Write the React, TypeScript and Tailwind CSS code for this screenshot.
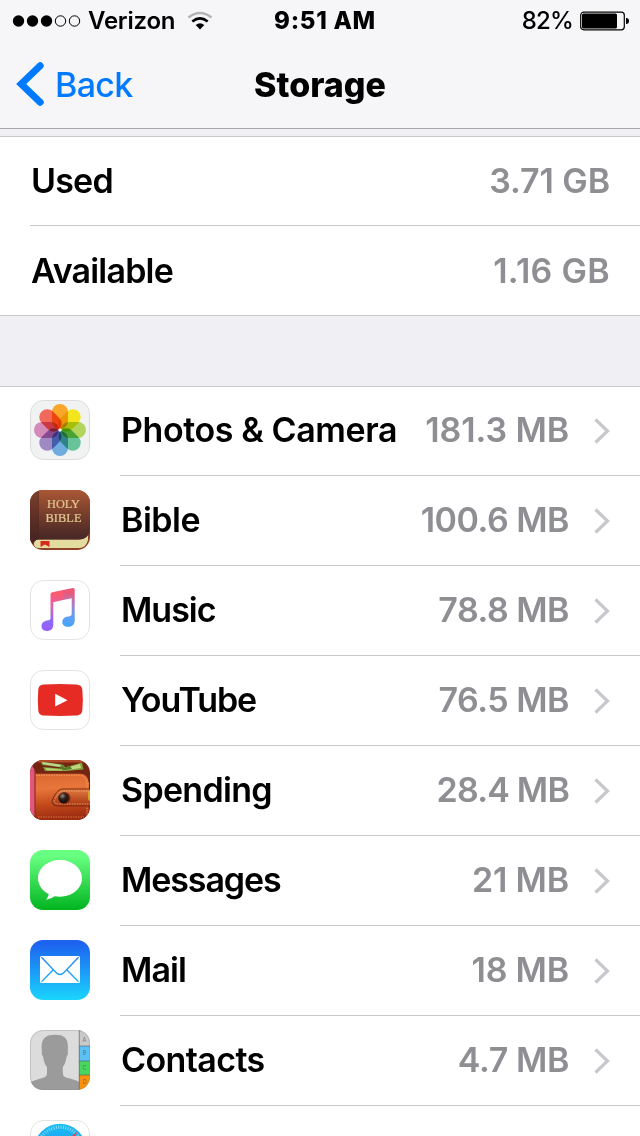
import { ReactNode } from 'react';

type StorageItem = {
  name: string;
  size: string;
  icon: ReactNode;
  nameClass: string;
  sizeClass: string;
};

const petals = ['#f9a62b', '#f2e51c', '#b3d55b', '#68c39a', '#70ace0', '#a08ac4', '#d58bb9', '#f2695c'];

const PhotosIcon = () => (
  <svg viewBox="0 0 60 60" className="size-[60px]">
    <rect x="0.5" y="0.5" width="59" height="59" rx="13" fill="#f1f3f3" stroke="#dcdcdc" />
    <g style={{ isolation: 'isolate' }}>
      {petals.map((color, index) => (
        <rect
          key={color}
          x="22"
          y="4"
          width="16"
          height="25"
          rx="8"
          fill={color}
          transform={`rotate(${index * 45} 30 30)`}
          className="mix-blend-multiply"
        />
      ))}
    </g>
    <circle cx="30" cy="30" r="1.6" fill="#fff" />
  </svg>
);

const BibleIcon = () => (
  <svg viewBox="0 0 60 60" className="size-[60px]">
    <defs>
      <linearGradient id="bible-cover" x1="0" y1="0" x2="0" y2="1">
        <stop offset="0" stopColor="#aa5835" />
        <stop offset="0.5" stopColor="#713b2b" />
        <stop offset="0.85" stopColor="#4b2927" />
      </linearGradient>
      <clipPath id="bible-clip">
        <rect width="60" height="60" rx="13" />
      </clipPath>
    </defs>
    <g clipPath="url(#bible-clip)">
      <rect width="60" height="60" fill="#8f4028" />
      <path d="M8 49.5H50Q56 49 58 44V50Q56 57.5 50 58H9Q4 58 4 54Q4 50 8 49.5Z" fill="#e3dca0" />
      <path d="M0 0H60V40Q59 49.5 48 49.5H9Q4 49.5 3 54L0 50Z" fill="url(#bible-cover)" />
      <path d="M0 0H8V49.5Q4 50 3 54L0 50Z" fill="#4a211d" fillOpacity="0.45" />
      <path d="M8.5 1V49" stroke="#3e1d1b" strokeOpacity="0.5" />
      <path d="M10.5 51H19.5V57L15 54.5L10.5 57Z" fill="#d9271c" />
    </g>
    <text x="33.5" y="18.3" textAnchor="middle" textLength="33" lengthAdjust="spacingAndGlyphs" fontSize="12.5" fill="#e0cb92" stroke="#e0cb92" strokeWidth="0.2" className="font-['Liberation_Serif',serif]">
      HOLY
    </text>
    <text x="33.5" y="31.5" textAnchor="middle" textLength="36" lengthAdjust="spacingAndGlyphs" fontSize="12.5" fill="#e0cb92" stroke="#e0cb92" strokeWidth="0.2" className="font-['Liberation_Serif',serif]">
      BIBLE
    </text>
  </svg>
);

const MusicIcon = () => (
  <svg viewBox="0 0 60 60" className="size-[60px]">
    <defs>
      <linearGradient id="music-left" x1="0" y1="8" x2="0" y2="51" gradientUnits="userSpaceOnUse">
        <stop offset="0.15" stopColor="#fa5b73" />
        <stop offset="0.45" stopColor="#d965b0" />
        <stop offset="0.75" stopColor="#8b6cf6" />
        <stop offset="1" stopColor="#9a5cff" />
      </linearGradient>
      <linearGradient id="music-right" x1="0" y1="8" x2="0" y2="47" gradientUnits="userSpaceOnUse">
        <stop offset="0.1" stopColor="#ee5776" />
        <stop offset="0.4" stopColor="#b27bc4" />
        <stop offset="0.7" stopColor="#669df2" />
        <stop offset="1" stopColor="#42a5fb" />
      </linearGradient>
    </defs>
    <rect x="0.5" y="0.5" width="59" height="59" rx="13" fill="#fff" stroke="#e3e3e3" />
    <path d="M20.5 14.5Q20.5 12.7 22.3 12.3L33 10.1V20.1L23.3 22.2V44.5C23.3 49 20.5 51 16.5 51C13.5 51 11.5 49 11.5 46.3C11.5 43 13.8 41 17 40.5C19.8 40.1 20.5 39.8 20.5 37.5Z" fill="url(#music-left)" />
    <path d="M33 10.1L42.8 8Q44.7 7.6 44.7 9.5V40C44.7 44.7 42 46.8 37.8 46.8C34.5 46.8 32.3 44.8 32.3 42.2C32.3 39 34.8 37 38 36.6C41 36.2 41.7 35.5 41.7 33.3V18.3L33 20.1Z" fill="url(#music-right)" />
  </svg>
);

const YouTubeIcon = () => (
  <svg viewBox="0 0 60 60" className="size-[60px]">
    <rect x="0.5" y="0.5" width="59" height="59" rx="13" fill="#fff" stroke="#e3e3e3" />
    <path d="M14 14.5Q30 13.5 46 14.5C50.5 14.8 52 16.5 52.4 20.5Q53.3 30 52.4 39.5C52 43.5 50.5 45.3 46 45.6Q30 46.5 14 45.6C9.8 45.3 8.5 43.5 8.2 39.5Q7.5 30 8.2 20.5C8.5 16.5 9.8 14.8 14 14.5Z" fill="#e62b24" />
    <path d="M25.2 23.8L37.5 30.2L25.2 36.6Z" fill="#fff" />
  </svg>
);

const SpendingIcon = () => (
  <svg viewBox="0 0 60 60" className="size-[60px]">
    <defs>
      <linearGradient id="wallet" x1="0" y1="0" x2="0.1" y2="1">
        <stop offset="0" stopColor="#d9642c" />
        <stop offset="0.35" stopColor="#e8763b" />
        <stop offset="0.7" stopColor="#c2481a" />
        <stop offset="1" stopColor="#9c2d10" />
      </linearGradient>
      <linearGradient id="wallet-strap" x1="0" y1="0" x2="0" y2="1">
        <stop offset="0" stopColor="#e27a42" />
        <stop offset="1" stopColor="#a63410" />
      </linearGradient>
      <radialGradient id="wallet-snap" cx="0.4" cy="0.3" r="0.7">
        <stop offset="0" stopColor="#9b8c83" />
        <stop offset="0.45" stopColor="#30211d" />
        <stop offset="1" stopColor="#140c0a" />
      </radialGradient>
      <clipPath id="wallet-clip">
        <rect width="60" height="60" rx="13" />
      </clipPath>
    </defs>
    <g clipPath="url(#wallet-clip)">
      <rect width="60" height="60" fill="#722510" />
      <path d="M2 0H60V2.5H8Z" fill="#b24b27" />
      <path d="M11 1.5L33 4.5L36 8L12 5Z" fill="#6f8d3c" />
      <path d="M12 2L31 4.8L30 7L13 4.2Z" fill="#c5d48d" />
      <path d="M13 7L31 8.5L52 2.5L53.5 9.5L36 11L15 11Z" fill="#7fa03c" />
      <path d="M15 8L31 9.5L50 4L51 8L34 10.5L17 10.2Z" fill="#c2d67e" />
      <path d="M29 6.5L34 8L40 6L42 9L33 10.5Z" fill="#567a28" />
      <path d="M4 13H51Q58 14 59 21V60H4Z" fill="url(#wallet)" />
      <path d="M0 5Q5 7 5 13V57L0 52Z" fill="#e2577a" />
      <path d="M5 10V58" stroke="#8f2c23" strokeWidth="1.2" />
      <path d="M6 15.2H49Q56.500 15.700 57 22.700V56" fill="none" stroke="#f0a56d" strokeWidth="0.9" strokeDasharray="1.5 1" />
      <path d="M6 13.2H51Q58.500 14 59 22" fill="none" stroke="#742814" strokeWidth="1.2" />
      <path d="M8 57H54" stroke="#e88653" strokeWidth="0.8" strokeDasharray="1.5 1" />
      <path d="M60 29H32Q26 30 22 41Q22 46 28 46H60Z" fill="url(#wallet-strap)" stroke="#812b13" />
      <path d="M60 31H33Q28 32 24 41Q24 44 29 44H60" fill="none" stroke="#f1aa73" strokeWidth="0.9" strokeDasharray="1.5 1" />
      <path d="M58 31H60V42L58 39Z" fill="#d6a22a" />
      <circle cx="34.5" cy="38" r="6" fill="#7d2b14" />
      <circle cx="33.5" cy="38" r="5.2" fill="url(#wallet-snap)" />
    </g>
  </svg>
);

const MessagesIcon = () => (
  <svg viewBox="0 0 60 60" className="size-[60px]">
    <defs>
      <linearGradient id="messages" x1="0" y1="0" x2="0" y2="1">
        <stop offset="0.1" stopColor="#67ff81" />
        <stop offset="1" stopColor="#01b41f" />
      </linearGradient>
    </defs>
    <rect width="60" height="60" rx="13" fill="url(#messages)" />
    <path d="M30 10C42.2 10 52 18.2 52 28.3C52 38.5 42.2 46.7 30 46.7C28.2 46.7 26.3 46.5 24.6 46.2C22 48 19 49.3 15.8 49.5C17.7 48 18.6 46 18.7 44.1C12.3 40.9 8 35 8 28.3C8 18.2 17.8 10 30 10Z" fill="#fff" />
  </svg>
);

const MailIcon = () => (
  <svg viewBox="0 0 60 60" className="size-[60px]">
    <defs>
      <linearGradient id="mail" x1="0" y1="0" x2="0" y2="60" gradientUnits="userSpaceOnUse">
        <stop offset="0.05" stopColor="#1d62f0" />
        <stop offset="1" stopColor="#1ad5fd" />
      </linearGradient>
    </defs>
    <rect width="60" height="60" rx="13" fill="url(#mail)" />
    <rect x="10" y="16" width="40" height="27" rx="1.5" fill="#fff" />
    <g fill="none" stroke="url(#mail)" strokeWidth="1.3">
      <path d="M11.5 17.2L25.5 32Q30 37 34.5 32L48.5 17.2" />
      <path d="M11.5 41.8L23 30M48.5 41.8L37 30" />
    </g>
  </svg>
);

const tabs = [
  { letter: 'A', color: '#c9c9c9', y: 0, height: 16 },
  { letter: 'B', color: '#5cc1f5', y: 16, height: 15 },
  { letter: 'C', color: '#48d75c', y: 31, height: 14 },
  { letter: 'D', color: '#fb9108', y: 45, height: 15 }
];

const ContactsIcon = () => (
  <svg viewBox="0 0 60 60" className="size-[60px]">
    <defs>
      <clipPath id="contacts-clip">
        <rect width="60" height="60" rx="13" />
      </clipPath>
    </defs>
    <g clipPath="url(#contacts-clip)">
      <rect width="60" height="60" fill="#dcdcdc" />
      <path d="M1 52Q3 50.5 14 47.5Q17 46.5 17 43V37Q14 34 13.2 27Q11 24 11.8 21C10.5 9 15 4.8 25 4.8C35 4.8 39 9 37.8 21Q38.8 24 36.5 27Q35.5 34 32.8 37V43Q33 46.5 36 47.5Q47 50 49 52V60H0Z" fill="#9b9b9b" />
      {tabs.map((tab) => (
        <g key={tab.letter}>
          <rect x="49" y={tab.y} width="11" height={tab.height} fill={tab.color} />
          <path d={`M49 ${tab.y}H60`} stroke="#50636b" strokeOpacity="0.6" strokeWidth="1.2" />
          <text x="54.5" y={tab.y === 0 ? 11.5 : tab.y + 9} textAnchor="middle" fontSize="5.5" fill="#4d626b" fillOpacity="0.8">
            {tab.letter}
          </text>
        </g>
      ))}
      <path d="M49.3 0V60" stroke="#666" strokeOpacity="0.6" strokeWidth="1.2" />
    </g>
    <rect x="0.5" y="0.5" width="59" height="59" rx="12.5" fill="none" stroke="#888" strokeOpacity="0.3" />
  </svg>
);

const SafariIcon = () => (
  <svg viewBox="0 0 60 60" className="size-[60px]">
    <defs>
      <linearGradient id="safari" x1="0" y1="0" x2="0" y2="1">
        <stop offset="0" stopColor="#1bc0f2" />
        <stop offset="1" stopColor="#1d70f0" />
      </linearGradient>
    </defs>
    <rect x="0.5" y="0.5" width="59" height="59" rx="13" fill="#fff" stroke="#e3e3e3" />
    <circle cx="30" cy="30" r="26.3" fill="url(#safari)" />
    <circle cx="30" cy="30" r="22.8" fill="none" stroke="#fff" strokeOpacity="0.65" strokeWidth="3.2" strokeDasharray="0.7 1.688" />
    <path d="M48 11.5L33.5 33L27 27Z" fill="#f5393c" />
    <path d="M12 48.5L33.5 33L27 27Z" fill="#f3f3f3" />
  </svg>
);

const items: StorageItem[] = [
  { name: 'Photos & Camera', size: '181.3 MB', icon: <PhotosIcon />, nameClass: 'tracking-[-0.4px]', sizeClass: 'tracking-[-0.1px]' },
  { name: 'Bible', size: '100.6 MB', icon: <BibleIcon />, nameClass: 'tracking-[-0.5px]', sizeClass: 'tracking-[-0.5px]' },
  { name: 'Music', size: '78.8 MB', icon: <MusicIcon />, nameClass: 'tracking-[-1px]', sizeClass: 'tracking-[-0.5px]' },
  { name: 'YouTube', size: '76.5 MB', icon: <YouTubeIcon />, nameClass: 'tracking-[-1.1px]', sizeClass: 'tracking-[-0.5px]' },
  { name: 'Spending', size: '28.4 MB', icon: <SpendingIcon />, nameClass: 'tracking-[-0.7px]', sizeClass: 'tracking-[-0.8px]' },
  { name: 'Messages', size: '21 MB', icon: <MessagesIcon />, nameClass: 'tracking-[-1.1px]', sizeClass: 'tracking-[-0.2px]' },
  { name: 'Mail', size: '18 MB', icon: <MailIcon />, nameClass: 'tracking-[-0.9px]', sizeClass: 'tracking-[-0.2px]' },
  { name: 'Contacts', size: '4.7 MB', icon: <ContactsIcon />, nameClass: 'tracking-[-0.6px]', sizeClass: 'tracking-[-0.4px]' }
];

export default function App() {
  return (
    <main className="flex h-[1136px] w-[640px] flex-col overflow-hidden bg-[#efeff4] font-['Inter',sans-serif] text-black">
      <header className="h-[129px] shrink-0 border-b border-[#a7a7aa] bg-[#f6f6f8]">
        <StatusBar />
        <nav className="grid h-[88px] grid-cols-3 items-center">
          <button className="flex items-center gap-[11px] pl-4 text-[#007aff]">
            <svg viewBox="0 0 28 44" className="h-11 w-7">
              <path d="M24.2 3.8L5.2 22L24.2 40.2" fill="none" stroke="currentColor" strokeWidth="7" strokeLinecap="round" strokeLinejoin="miter" />
            </svg>
            <span className="pt-px text-[34px]/[40px] font-medium tracking-[-0.7px]">Back</span>
          </button>
          <h1 className="pt-px text-center text-[34px]/[40px] font-extrabold">Storage</h1>
        </nav>
      </header>

      <section className="mt-[7px] shrink-0 border-y border-[#c8c7cc] bg-white pl-[30px]">
        <SummaryRow label="Used" value="3.71 GB" valueClass="tracking-[-0.1px]" />
        <div className="h-px bg-[#c8c7cc]" />
        <SummaryRow label="Available" value="1.16 GB" valueClass="tracking-[0.3px]" />
      </section>

      <ul className="mt-[70px] shrink-0 border-t border-[#c8c7cc] bg-white">
        {items.map((item) => (
          <StorageRow key={item.name} item={item} />
        ))}
        <li className="h-[90px] pt-3.5 pl-[30px]">
          <SafariIcon />
        </li>
      </ul>
    </main>
  );
}

const StatusBar = () => (
  <div className="grid h-10 grid-cols-3 items-center text-[24px]/[30px]">
    <div className="flex items-center pt-px pl-3">
      <svg viewBox="0 0 70 12" className="h-3 w-[70px] shrink-0">
        <circle cx="6.5" cy="6" r="5.7" />
        <circle cx="20.5" cy="6" r="5.7" />
        <circle cx="34.5" cy="6" r="5.7" />
        <circle cx="48.5" cy="6" r="5.2" fill="none" stroke="#000" />
        <circle cx="62.5" cy="6" r="5.2" fill="none" stroke="#000" />
      </svg>
      <span className="ml-1.5 font-semibold tracking-[-0.2px]">Verizon</span>
      <svg viewBox="0 0 26 20" className="ml-3 h-5 w-[26px] shrink-0" fill="none" strokeWidth="2.6">
        <path d="M1.5 6.5Q13 -2.5 24.5 6.5" stroke="#b3b3b5" />
        <path d="M5.3 10.5Q13 4.3 20.7 10.5" stroke="#000" />
        <path d="M8.7 14Q13 10.6 17.3 14L13 18.5Z" fill="#000" stroke="none" />
      </svg>
    </div>
    <span className="pt-0.5 pl-2.5 text-center font-extrabold tracking-[0.7px]">9:51 AM</span>
    <div className="flex items-center justify-end pt-px pr-[11px] font-medium">
      <span className="tracking-[-0.8px]">82%</span>
      <svg viewBox="0 0 49 20" className="ml-[7px] h-5 w-[49px]">
        <rect x="0.7" y="1.2" width="43.6" height="17.6" rx="3" fill="none" stroke="#000" strokeWidth="1.2" />
        <rect x="2" y="2.5" width="35" height="15" rx="1.5" />
        <path d="M46 7Q49 7 49 10Q49 13 46 13Z" />
      </svg>
    </div>
  </div>
);

interface SummaryRowProps {
  label: string;
  value: string;
  valueClass: string;
}

const SummaryRow = ({ label, value, valueClass }: SummaryRowProps) => (
  <div className="flex h-[88px] items-center justify-between pr-[30px] pl-px text-[34px]/[40px] font-semibold tracking-[-0.8px] last:h-[89px]">
    <span>{label}</span>
    <span className={`text-[#8e8e93] ${valueClass}`}>{value}</span>
  </div>
);

const StorageRow = ({ item }: { item: StorageItem }) => (
  <li className="flex h-[90px] pl-[30px] first:-mt-px">
    <div className="w-[90px] shrink-0 pt-3.5">{item.icon}</div>
    <div className="flex flex-1 items-center border-b border-[#c8c7cc] pr-[30px] pb-px pl-px text-[34px]/[40px] font-semibold">
      <span className={item.nameClass}>{item.name}</span>
      <span className={`ml-auto text-[#8e8e93] ${item.sizeClass}`}>{item.size}</span>
      <svg viewBox="0 0 16 26" className="mt-px ml-[25px] h-[26px] w-4">
        <path d="M1.5 1.5L13.5 13L1.5 24.5" fill="none" stroke="#c7c7cc" strokeWidth="3.2" />
      </svg>
    </div>
  </li>
);
